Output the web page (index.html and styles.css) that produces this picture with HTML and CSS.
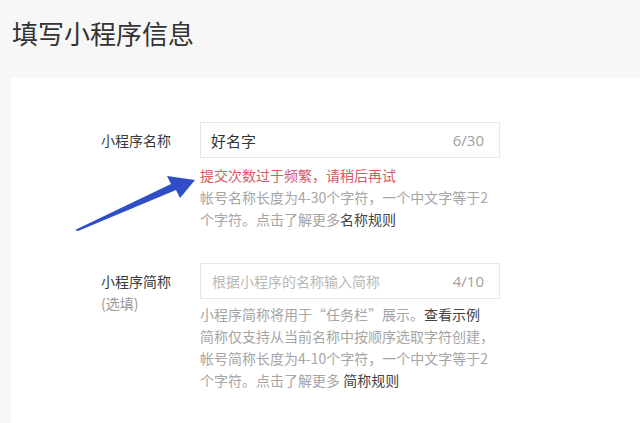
FILE: index.html
```html
<!DOCTYPE html>
<html lang="zh-CN">
<head>
<meta charset="utf-8">
<title>填写小程序信息</title>
<link rel="stylesheet" href="styles.css">
</head>
<body>
<header class="page-head">
  <h1 class="page-title">填写小程序信息</h1>
</header>
<main class="card">
  <div class="form-row">
    <div class="label"><span class="label-inner">小程序名称</span></div>
    <div class="field">
      <div class="input">
        <span class="value">好名字</span>
        <span class="counter">6/30</span>
      </div>
      <p class="error">提交次数过于频繁，请稍后再试</p>
      <p class="help">帐号名称长度为4-30个字符，一个中文字等于2<br>个字符。点击了解更多<a class="link">名称规则</a></p>
    </div>
  </div>
  <div class="form-row second">
    <div class="label"><span class="label-inner">小程序简称<br><span class="optional">(选填)</span></span></div>
    <div class="field">
      <div class="input">
        <span class="placeholder">根据小程序的名称输入简称</span>
        <span class="counter">4/10</span>
      </div>
      <p class="help tight">小程序简称将用于“任务栏”展示。<a class="link">查看示例</a><br>简称仅支持从当前名称中按顺序选取字符创建，<br>帐号简称长度为4-10个字符，一个中文字等于2<br>个字符。点击了解更多 <a class="link">简称规则</a></p>
    </div>
  </div>
</main>
<svg class="arrow" width="640" height="423" viewBox="0 0 640 423" aria-hidden="true">
  <polygon points="75,230 171,184 167,176 195,180 180,198 176,190 78,231" fill="#2f4ec6"/>
</svg>
</body>
</html>
```
FILE: styles.css
```css
html, body {
  margin: 0;
  padding: 0;
}
body {
  background: #f7f7f7;
  font-family: "Noto Sans CJK SC", "Noto Sans", sans-serif;
  color: #353535;
  width: 640px;
  height: 423px;
  overflow: hidden;
}
.page-head {
  height: 78px;
  box-sizing: border-box;
  padding: 14px 0 0 12px;
}
.page-title {
  margin: 0;
  font-size: 26px;
  line-height: 38px;
  font-weight: 400;
  color: #333;
}
.card {
  margin-left: 11px;
  background: #fff;
  height: 345px;
  box-sizing: border-box;
  padding-top: 44px;
}
.form-row {
  display: grid;
  grid-template-columns: 160px 300px;
  column-gap: 29px;
}
.form-row.second {
  margin-top: 33px;
}
.label {
  text-align: right;
  font-size: 14px;
  line-height: 22px;
  padding-top: 7px;
  color: #3a3a3a;
  white-space: nowrap;
}
.label-inner {
  display: inline-block;
  text-align: left;
}
.optional {
  color: #9a9a9a;
}
.field {
  display: flex;
  flex-direction: column;
}
.input {
  height: 36px;
  box-sizing: border-box;
  border: 1px solid #e6e6e6;
  display: flex;
  align-items: center;
  justify-content: space-between;
  padding: 0 15px 0 10px;
  font-size: 14px;
}
.value {
  color: #333;
  font-size: 15px;
}
.placeholder {
  color: #b8b8b8;
  padding-left: 1px;
}
.counter {
  color: #a0a0a0;
  font-size: 15px;
  font-family: "Open Sans", "Noto Sans", sans-serif;
}
.error {
  margin: 6px 0 0;
  font-size: 14px;
  line-height: 22px;
  color: #d45a66;
  white-space: nowrap;
}
.help {
  margin: 0;
  font-size: 14px;
  line-height: 22px;
  color: #a5a5a5;
  white-space: nowrap;
}
.help.tight {
  margin-top: 4px;
}
.link {
  color: #444;
}
.arrow {
  position: absolute;
  left: 0;
  top: 0;
  pointer-events: none;
}
```
